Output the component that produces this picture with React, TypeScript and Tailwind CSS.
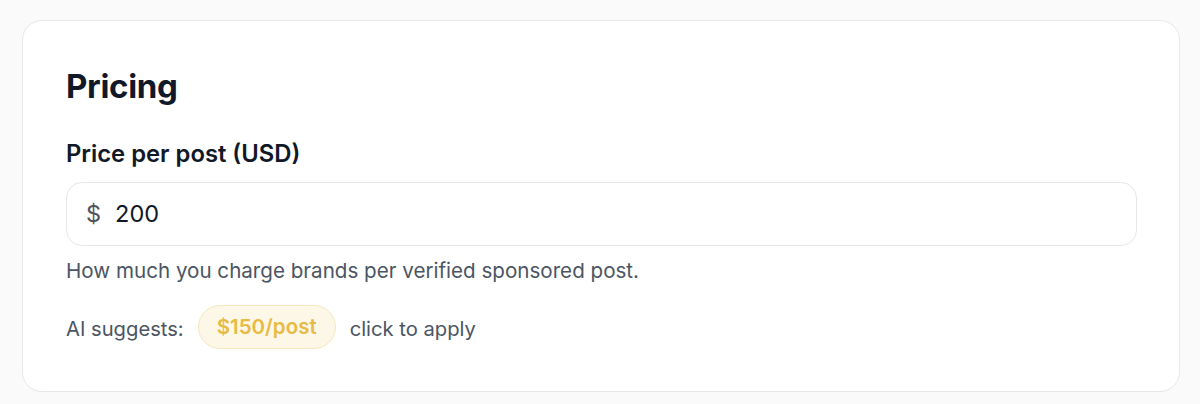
import React from "react";

export default function App() {
  return (
    <div className="min-h-[404px] w-[1200px] bg-[#fafafa] pt-[20px] pl-[22px]" style={{ fontFamily: "Inter, 'Noto Sans', sans-serif" }}>
      <div className="w-[1158px] h-[372px] rounded-[20px] border border-[#e8e8e8] bg-white pl-[43px] pr-[43px] pt-[45px]">
        <h2 className="text-[33px] leading-[40px] font-bold text-[#111827] tracking-[-0.3px]">Pricing</h2>
        <label className="mt-[32px] block text-[23.8px] leading-[32px] font-semibold text-[#111827]">Price per post (USD)</label>
        <div className="mt-[12px] flex h-[64px] w-[1071px] items-center rounded-[16px] border border-[#e5e7eb] bg-white pl-[19px]">
          <span className="text-[23.5px] text-[#52525b]">$</span>
          <span className="ml-[14px] text-[23.5px] text-[#111827]">200</span>
        </div>
        <p className="mt-[11px] text-[20.6px] leading-[28px] text-[#4b5563]">How much you charge brands per verified sponsored post.</p>
        <div className="mt-[20px] flex items-center gap-[14px] text-[20.2px] leading-[28px] text-[#4b5563]">
          <span className="mt-[4px]">AI suggests:</span>
          <button className="flex h-[44px] items-center rounded-full border border-[#f5e7bf] bg-[#fdf7e7] px-[18px] text-[20.5px] font-semibold text-[#e8bb44]">$150/post</button>
          <span className="mt-[4px]">click to apply</span>
        </div>
      </div>
    </div>
  );
}
